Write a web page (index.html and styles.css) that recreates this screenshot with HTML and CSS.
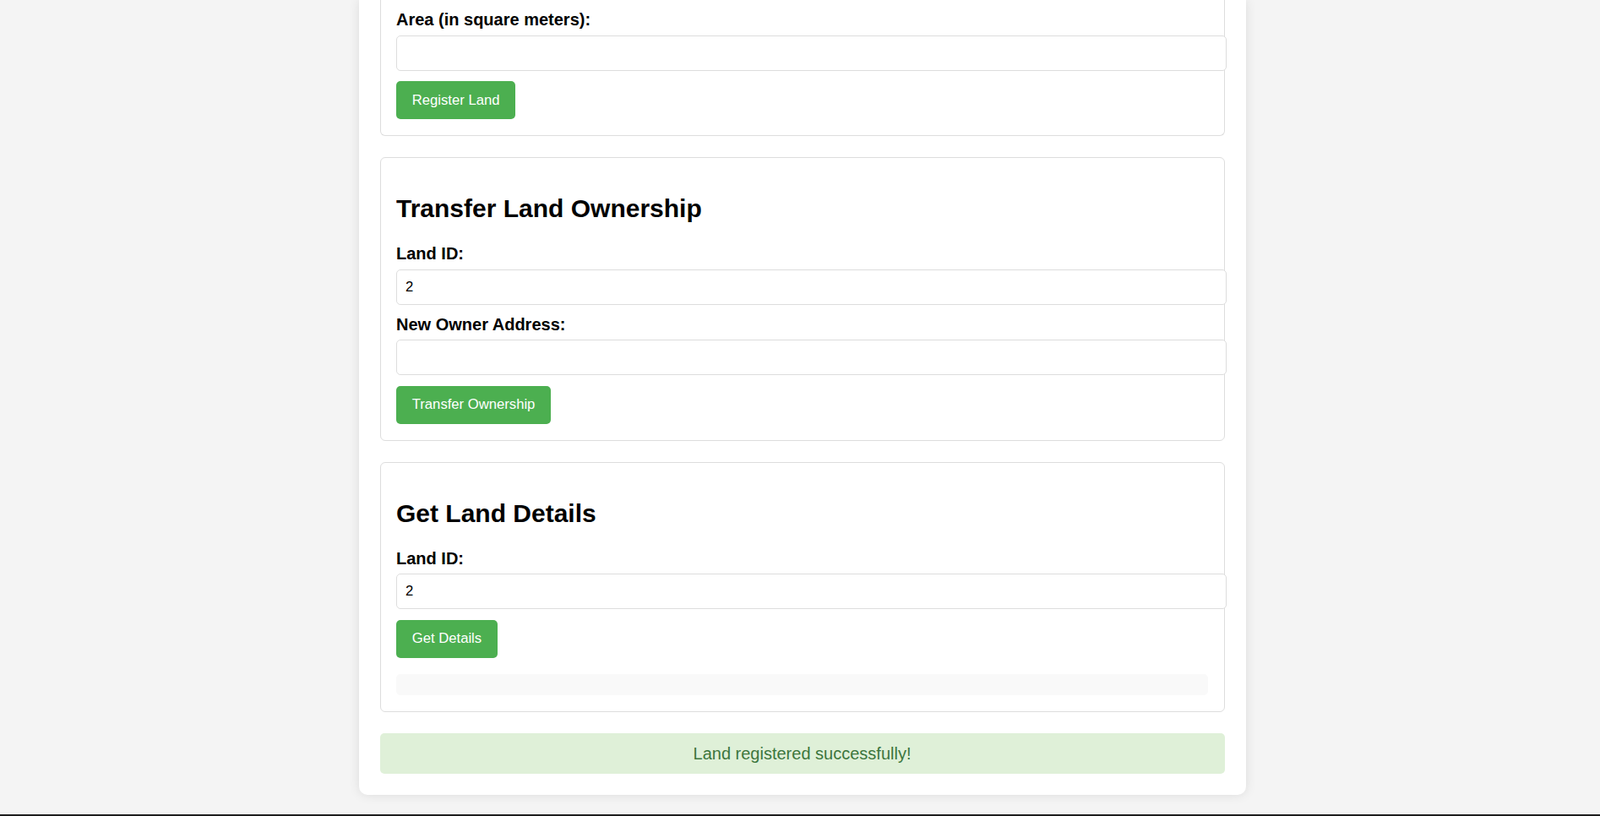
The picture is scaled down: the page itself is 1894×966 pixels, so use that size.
FILE: index.html
```html
<!DOCTYPE html>
<html lang="en">
<head>
<meta charset="utf-8">
<title>Land Registry</title>
<link rel="stylesheet" href="styles.css">
</head>
<body>
<div class="container">
  <div class="section section-cut">
    <label class="field-label" for="area">Area (in square meters):</label>
    <input class="field-input" id="area" type="text">
    <button class="btn" type="button">Register Land</button>
  </div>

  <div class="section">
    <h2 class="section-title">Transfer Land Ownership</h2>
    <label class="field-label" for="transferId">Land ID:</label>
    <input class="field-input" id="transferId" type="text" value="2">
    <label class="field-label" for="newOwner">New Owner Address:</label>
    <input class="field-input" id="newOwner" type="text">
    <button class="btn" type="button">Transfer Ownership</button>
  </div>

  <div class="section">
    <h2 class="section-title">Get Land Details</h2>
    <label class="field-label" for="detailsId">Land ID:</label>
    <input class="field-input" id="detailsId" type="text" value="2">
    <button class="btn" type="button">Get Details</button>
    <div class="result"></div>
  </div>

  <div class="message">Land registered successfully!</div>
</div>
<div class="bottom-edge"></div>
</body>
</html>
```

FILE: styles.css
```css
html, body {
  margin: 0;
  padding: 0;
}

body {
  background: #f4f4f4;
  font-family: "Liberation Sans", Arial, sans-serif;
  color: #000;
  padding-left: 5px;
  height: 966px;
  overflow: hidden;
}

.container {
  width: 1000px;
  margin: 0 auto 25px;
  padding: 0 25px 25px;
  background: #fff;
  border-radius: 0 0 10px 10px;
  box-shadow: 0 0 12.5px rgba(0, 0, 0, 0.1);
}

.section {
  border: 1px solid #ddd;
  border-radius: 6px;
  padding: 18.75px 18.5px;
  margin-bottom: 25px;
}

.section-cut {
  border-top: none;
  border-radius: 0 0 6px 6px;
  padding-top: 12.3px;
}

.section-title {
  font-size: 30px;
  font-weight: bold;
  margin: 24.9px 0;
  line-height: normal;
}

.field-label {
  display: block;
  font-weight: bold;
  font-size: 20px;
  line-height: normal;
  margin-bottom: 6.25px;
}

.field-input {
  display: block;
  box-sizing: content-box;
  width: 100%;
  padding: 10px;
  margin: 0 0 12.5px;
  border: 1px solid #ddd;
  border-radius: 5px;
  font-family: "Liberation Sans", Arial, sans-serif;
  font-size: 16.67px;
  line-height: normal;
  color: #000;
  background: #fff;
  outline: none;
}

.btn {
  display: inline-block;
  background: #4caf50;
  color: #fff;
  border: none;
  border-radius: 5px;
  padding: 12.5px 18.75px;
  font-family: "Liberation Sans", Arial, sans-serif;
  font-size: 16.67px;
  line-height: normal;
  cursor: pointer;
  vertical-align: top;
}

.result {
  margin-top: 19.5px;
  padding: 12.5px;
  background: #f9f9f9;
  border-radius: 5px;
}

.message {
  padding: 12.5px;
  background: #dff0d8;
  color: #3c763d;
  text-align: center;
  font-size: 20px;
  line-height: normal;
  border-radius: 5px;
}

.bottom-edge {
  position: fixed;
  left: 0;
  right: 0;
  bottom: 0;
  height: 2px;
  background: #1e1e1e;
}
```
